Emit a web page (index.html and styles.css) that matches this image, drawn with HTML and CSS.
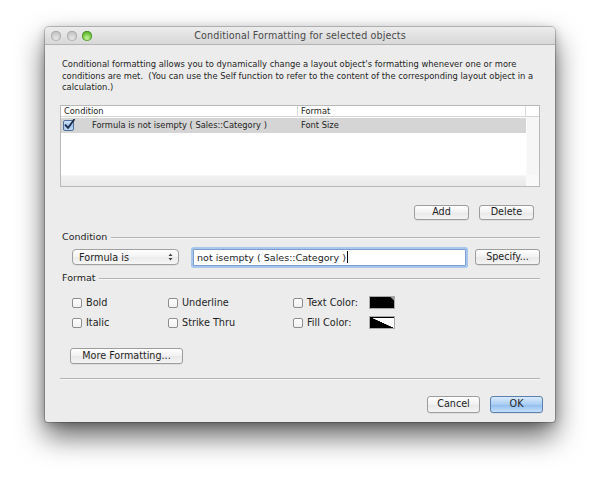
FILE: index.html
```html
<!DOCTYPE html>
<html>
<head>
<meta charset="utf-8">
<link rel="stylesheet" href="styles.css">
</head>
<body>
<div class="window">
  <div class="titlebar">
    <div class="lights">
      <span class="light gray"></span>
      <span class="light gray"></span>
      <span class="light green"></span>
    </div>
    <div class="title">Conditional Formatting for selected objects</div>
    <div></div>
  </div>
  <div class="content">
    <p class="desc">Conditional formatting allows you to dynamically change a layout object's formatting whenever one or more conditions are met.&nbsp; (You can use the Self function to refer to the content of the corresponding layout object in a calculation.)</p>

    <div class="table">
      <div class="thead">
        <div class="th th-cond">Condition</div>
        <div class="th th-fmt">Format</div>
        <div class="th th-sb"></div>
      </div>
      <div class="tbody">
        <div class="list">
          <div class="row selected">
            <span class="rowcheck">
              <svg width="12" height="12" viewBox="0 0 12 12">
                <defs>
                  <linearGradient id="cbg" x1="0" y1="0" x2="0" y2="1">
                    <stop offset="0" stop-color="#d9e9fb"/>
                    <stop offset="0.5" stop-color="#9fc4ee"/>
                    <stop offset="1" stop-color="#c3dcf7"/>
                  </linearGradient>
                </defs>
                <rect x="0.5" y="1.5" width="10" height="10" rx="1.5" fill="url(#cbg)" stroke="#4f6f98"/>
                <path d="M2.6 6.2 L5 9 L11 0.8" fill="none" stroke="#1c2a48" stroke-width="1.8" stroke-linecap="round" stroke-linejoin="round"/>
              </svg>
            </span>
            <span class="cell-cond">Formula is not isempty ( Sales::Category )</span>
            <span class="cell-fmt">Font Size</span>
          </div>
        </div>
        <div class="vscroll"></div>
        <div class="hscroll"></div>
        <div class="corner"></div>
      </div>
    </div>

    <div class="btnrow">
      <button class="btn btn-add">Add</button>
      <button class="btn btn-del">Delete</button>
    </div>

    <div class="group-head"><span>Condition</span><i></i></div>
    <div class="cond-row">
      <div class="popup"><span>Formula is</span>
        <svg class="arrows" width="5" height="8" viewBox="0 0 5 8"><path d="M0.5 3 L2.5 0.5 L4.5 3 Z M0.5 5 L2.5 7.5 L4.5 5 Z" fill="#444"/></svg>
      </div>
      <div class="field">not isempty ( Sales::Category )<span class="caret"></span></div>
      <button class="btn btn-spec">Specify...</button>
    </div>

    <div class="group-head fmt-head"><span>Format</span><i></i></div>
    <div class="fmt-grid">
      <label class="cb"><span class="box"></span>Bold</label>
      <label class="cb"><span class="box"></span>Underline</label>
      <label class="cb"><span class="box"></span><span class="cl">Text Color:</span><span class="swatch sw-text"></span></label>
      <label class="cb"><span class="box"></span>Italic</label>
      <label class="cb"><span class="box"></span>Strike Thru</label>
      <label class="cb"><span class="box"></span><span class="cl">Fill Color:</span><span class="swatch sw-fill"></span></label>
    </div>

    <button class="btn btn-more">More Formatting...</button>
    <div class="sep"></div>
  </div>
  <div class="footer">
    <button class="btn btn-cancel">Cancel</button>
    <button class="btn btn-ok">OK</button>
  </div>
</div>
</body>
</html>
```
FILE: styles.css
```css
* { box-sizing: border-box; }
html, body { margin: 0; padding: 0; background: #ffffff; }
body {
  font-family: "DejaVu Sans", "Lucida Grande", sans-serif;
  font-size: 8.8px;
  color: #1e1e1e;
  width: 600px;
  height: 485px;
  overflow: hidden;
}
.window {
  margin: 27px 0 0 45px;
  width: 510px;
  height: 395px;
  background: #ececec;
  border-radius: 4px 4px 3px 3px;
  box-shadow: 0 0 0 1px rgba(0,0,0,0.2), 0 14px 28px rgba(0,0,0,0.62), 0 2px 10px rgba(0,0,0,0.22);
  display: flex;
  flex-direction: column;
}
.titlebar {
  height: 18px;
  display: grid;
  grid-template-columns: 1fr auto 1fr;
  align-items: center;
  background: linear-gradient(#ececec, #d8d8d8);
  border-bottom: 1px solid #b4b4b4;
  border-radius: 4px 4px 0 0;
}
.lights { display: flex; gap: 5.5px; padding-left: 6px; }
.light {
  width: 10px; height: 10px; border-radius: 50%;
  display: block;
}
.light.gray {
  background: radial-gradient(circle at 50% 70%, #e6e6e6 0%, #c9c9c9 55%, #b2b2b2 100%);
  box-shadow: inset 0 0 0 0.5px #9a9a9a;
}
.light.green {
  background: radial-gradient(circle at 50% 70%, #c8f29a 0%, #6cc33c 55%, #3f8f1f 100%);
  box-shadow: inset 0 0 0 0.5px #3e7d22;
}
.title {
  font-size: 9.6px;
  color: #4a4a4a;
  text-align: center;
  letter-spacing: 0.1px;
}
.content { padding: 0 15px; }
.desc {
  margin: 14px 0 0 2px;
  width: 472px;
  font-size: 8.37px;
  line-height: 11.5px;
  color: #1e1e1e;
}
.table {
  margin-top: 11px;
  height: 82px;
  border: 1px solid #b9b9b9;
  background: #fff;
  display: flex;
  flex-direction: column;
  font-size: 8.3px;
}
.thead {
  height: 11px;
  display: grid;
  grid-template-columns: 237px 1fr 13px;
  border-bottom: 1px solid #d6d6d6;
  line-height: 10px;
  background: #fff;
}
.th { padding-left: 3px; }
.th-cond { border-right: 1px solid #dcdcdc; }
.th-fmt { border-right: 1px solid #dcdcdc; }
.tbody {
  flex: 1;
  display: grid;
  grid-template-columns: 1fr 13px;
  grid-template-rows: 1fr 11px;
}
.list { background: #fff; }
.row {
  height: 15px;
  margin-top: 1px;
  display: flex;
  align-items: center;
}
.row.selected { background: #d5d5d5; }
.rowcheck { width: 31px; padding-left: 2px; display: flex; align-items: center; }
.rowcheck svg { display: block; }
.cell-cond { width: 206px; }
.cell-fmt { padding-left: 3px; }
.vscroll { background: #f6f6f6; border-left: 1px solid #fbfbfb; }
.hscroll { background: linear-gradient(#f2f2f2, #e9e9e9); border-top: 1px solid #f7f7f7; }
.corner { background: #f9f9f9; }

.btn {
  font-family: inherit;
  font-size: 9.6px;
  color: #1e1e1e;
  border: 1px solid #9d9d9d;
  border-radius: 3px;
  background: linear-gradient(#ffffff, #f1f1f1 50%, #e8e8e8 51%, #f4f4f4);
  padding: 0;
  margin: 0;
  line-height: 1;
  box-shadow: 0 0.5px 0.5px rgba(0,0,0,0.12);
}
.btnrow {
  display: flex;
  justify-content: flex-end;
  gap: 10px;
  margin-top: 18px;
  padding-right: 6px;
}
.btn-add, .btn-del { width: 55px; height: 15px; }

.group-head {
  display: flex;
  align-items: center;
  gap: 4px;
  margin-top: 11px;
  height: 12px;
  padding-left: 2px;
  font-size: 9.5px;
}
.group-head i {
  flex: 1;
  height: 1px;
  background: #b3b3b3;
  box-shadow: 0 1px 0 #f8f8f8;
  margin-top: 1px;
}
.fmt-head { margin-top: 6px; }

.cond-row {
  display: flex;
  align-items: center;
  margin-top: 6px;
  height: 17px;
}
.popup {
  margin-left: 12px;
  width: 107px;
  height: 16px;
  border: 1px solid #a0a0a0;
  border-radius: 4px;
  background: linear-gradient(#ffffff, #f3f3f3 50%, #ebebeb 51%, #f6f6f6);
  display: flex;
  align-items: center;
  justify-content: space-between;
  padding: 0 5px 0 6px;
  font-size: 9.7px;
  box-shadow: 0 0.5px 0.5px rgba(0,0,0,0.12);
}
.arrows { display: block; }
.field {
  margin-left: 14px;
  width: 273px;
  height: 17px;
  background: #fff;
  border: 1px solid #7c9fcf;
  box-shadow: 0 0 0 2px #a6c6ee;
  border-radius: 1px;
  display: flex;
  align-items: center;
  padding-left: 3px;
  font-size: 9.55px;
}
.caret {
  display: inline-block;
  width: 1px;
  height: 12px;
  background: #000;
  margin-left: 1px;
}
.btn-spec { margin-left: 9px; width: 65px; height: 16px; }

.fmt-grid {
  margin-top: 9px;
  margin-left: 12px;
  display: grid;
  grid-template-columns: 96px 125px auto;
  grid-auto-rows: 20px;
}
.cb {
  display: flex;
  align-items: center;
  gap: 4px;
  font-size: 9.7px;
}
.box {
  width: 10px;
  height: 10px;
  border: 1px solid #8e8e8e;
  border-radius: 2px;
  background: linear-gradient(#ffffff, #f0f0f0);
  flex: none;
}
.cl { width: 58px; white-space: nowrap; }
.swatch {
  width: 26px;
  height: 13px;
  border: 1px solid #a9a9a9;
  flex: none;
}
.sw-text {
  background: linear-gradient(225deg, #9a9a9a 0, #9a9a9a 2px, #000 3px, #000 100%);
}
.sw-fill {
  background: linear-gradient(to top right, #000 0, #000 49%, #ffffff 51%, #ffffff 100%);
  box-shadow: inset 0 1px 0 #000;
}
.btn-more {
  display: block;
  margin-top: 15px;
  margin-left: 10px;
  width: 113px;
  height: 16px;
}
.sep {
  margin-top: 14px;
  height: 1px;
  background: #b3b3b3;
  box-shadow: 0 1px 0 #f8f8f8;
}
.footer {
  display: flex;
  justify-content: flex-end;
  gap: 10px;
  padding-right: 12px;
  margin-top: 17px;
}
.btn-cancel, .btn-ok { width: 53px; height: 17px; }
.btn-ok {
  border-color: #5b7fae;
  background: linear-gradient(#d9eafc, #a9cdf3 50%, #8dbbed 51%, #c5e0fa);
}
```
